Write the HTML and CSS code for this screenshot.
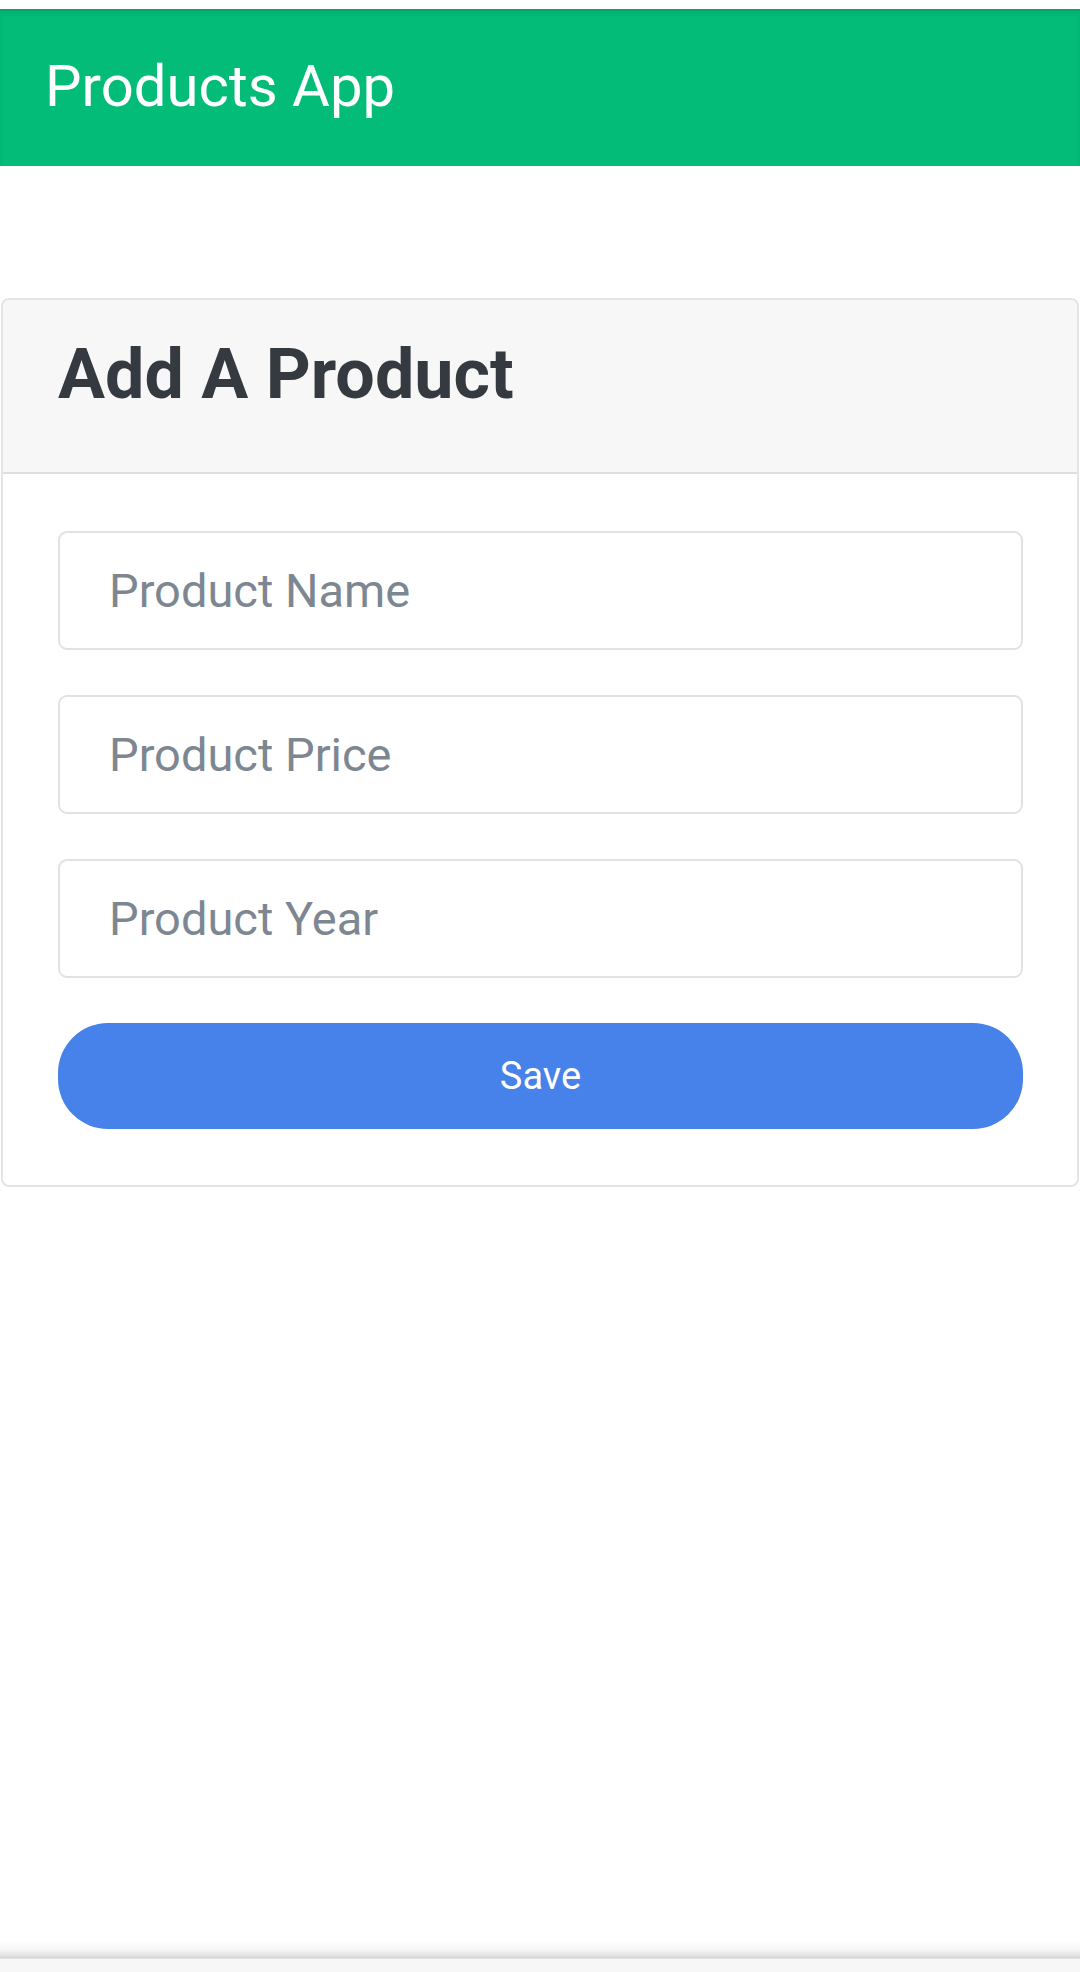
FILE: index.html
```html
<!DOCTYPE html>
<html lang="en">
<head>
<meta charset="utf-8">
<title>Products App</title>
<link rel="stylesheet" href="styles.css">
</head>
<body>
<div class="page">
  <div class="top-strip"></div>
  <header class="navbar">
    <span class="brand">Products App</span>
  </header>
  <main class="content">
    <section class="card">
      <div class="card-header">
        <h1 class="card-title">Add A Product</h1>
      </div>
      <form class="card-body">
        <input class="field" type="text" placeholder="Product Name">
        <input class="field" type="text" placeholder="Product Price">
        <input class="field" type="text" placeholder="Product Year">
        <button class="save-btn" type="button">Save</button>
      </form>
    </section>
  </main>
  <div class="bottom-bar"></div>
</div>
</body>
</html>
```

FILE: styles.css
```css
* { box-sizing: border-box; }
html, body {
  margin: 0;
  padding: 0;
  background: #ffffff;
  font-family: Roboto, "Noto Sans", "Liberation Sans", sans-serif;
}
.page {
  min-height: 1972px;
  display: flex;
  flex-direction: column;
}
.top-strip {
  height: 9px;
  background: #ffffff;
}
.navbar {
  height: 157px;
  background: #02bc77;
  border-top: 2px solid #03a869;
  box-shadow: inset 0 3px 4px rgba(0, 0, 0, 0.06);
  display: flex;
  align-items: center;
  padding-left: 45px;
}
.brand {
  color: #ffffff;
  font-size: 58px;
  font-weight: 400;
  line-height: 1;
  margin-top: -6px;
}
.content {
  flex: 1;
  padding-top: 132px;
}
.card {
  margin: 0 1px;
  border: 2px solid #e4e4e4;
  border-radius: 8px;
  overflow: hidden;
  background: #ffffff;
}
.card-header {
  background: #f7f7f7;
  border-bottom: 2px solid #dedede;
  padding: 32px 55px 55px;
}
.card-title {
  margin: 0;
  font-size: 70px;
  line-height: 1.22;
  font-weight: 700;
  color: #343a40;
}
.card-body {
  display: flex;
  flex-direction: column;
  gap: 45px;
  padding: 57px 54px 56px 55px;
}
.field {
  height: 119px;
  border: 2px solid #e2e2e2;
  border-radius: 9px;
  padding: 0 49px;
  font-family: inherit;
  font-size: 47px;
  color: #343a40;
  background: #ffffff;
  outline: none;
}
.field::placeholder {
  color: #7d8791;
}
.save-btn {
  height: 106px;
  border: none;
  border-radius: 50px;
  background: #4682e9;
  color: #ffffff;
  font-family: inherit;
  font-size: 38px;
  font-weight: 400;
}
.bottom-bar {
  height: 32px;
  background: linear-gradient(to bottom, #ffffff 0px, #f6f6f6 10px, #dcdcdc 17px, #cfcfcf 18px, #f7f7f7 19px, #f7f7f7 32px);
}
```
